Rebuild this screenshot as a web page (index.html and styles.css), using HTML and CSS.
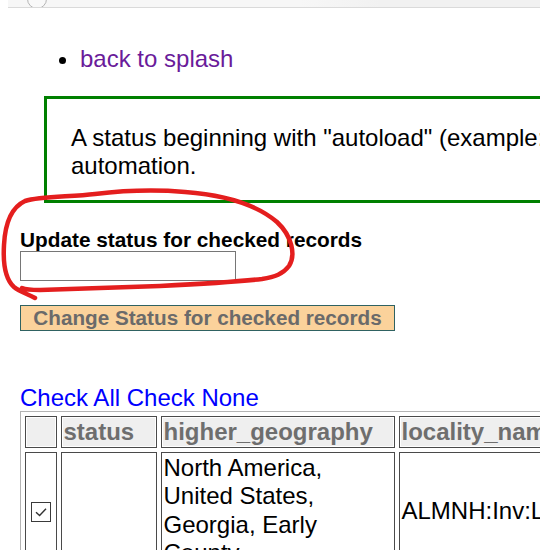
FILE: index.html
```html
<!DOCTYPE html>
<html lang="en">
<head>
<meta charset="utf-8">
<title>Update status</title>
<link rel="stylesheet" href="styles.css">
</head>
<body>
<div class="chrome"><span class="chrome-btn"></span></div>
<main class="page">
  <ul class="nav">
    <li><a class="nav-link" href="#">back to splash</a></li>
  </ul>
  <div class="notice">
    <p>A status beginning with "autoload" (example: "autoload_core") will be picked up by<br>automation.</p>
  </div>
  <form class="status-form">
    <label class="status-label" for="status">Update status for checked records</label>
    <input class="status-input" id="status" type="text">
    <button class="status-btn" type="button">Change Status for checked records</button>
  </form>
  <div class="checks"><a class="check-link" href="#">Check All</a> <a class="check-link" href="#">Check None</a></div>
  <table class="results">
    <thead>
      <tr>
        <th class="c-check"></th>
        <th class="c-status">status</th>
        <th class="c-geo">higher_geography</th>
        <th class="c-loc">locality_name</th>
      </tr>
    </thead>
    <tbody>
      <tr>
        <td class="cell-check">
          <span class="checkbox"><svg width="20" height="20" viewBox="0 0 20 20"><rect x="0.5" y="0.5" width="19" height="19" fill="#fff" stroke="#3a3a3a"/><path d="M5 10.2 L8.6 13.6 L15 6.8" fill="none" stroke="#333" stroke-width="1.4"/></svg></span>
        </td>
        <td></td>
        <td>North America, United States, Georgia, Early County</td>
        <td>ALMNH:Inv:Locality</td>
      </tr>
    </tbody>
  </table>
</main>
<svg class="scribble" width="540" height="550" viewBox="0 0 540 550">
  <path d="M35 298 C28 294 20 292 14 287 C5 279 3 262 4 245 C5 225 10 208 25 201 C40 196 70 197 95 194 C120 191 150 189 185 192 C225 195 257 205 277 222 C292 236 296 255 289 266 C283 274 275 277 262 279 C235 282 200 284 160 286 C110 288 70 289 40 290 C30 290 24 289 22 288" fill="none" stroke="#e41e1e" stroke-width="4.5" stroke-linecap="round" stroke-linejoin="round"/>
</svg>
</body>
</html>
```

FILE: styles.css
```css
html, body {
  margin: 0;
  padding: 0;
  background: #fff;
  overflow-x: hidden;
}

body {
  font-family: "Liberation Sans", Arial, sans-serif;
  font-size: 24px;
  color: #000;
  position: relative;
}

.chrome {
  margin-left: 8px;
  height: 7px;
  background: linear-gradient(to right, #f7f7f7 0%, #f7f7f7 55%, #f1f1f1 70%, #f1f1f1 100%);
  border-bottom: 1px solid #dadada;
  overflow: hidden;
}

.chrome-btn {
  display: block;
  width: 18px;
  height: 18px;
  margin: -11px 0 0 19px;
  border: 1.5px solid #b5b5b5;
  border-radius: 50%;
  background: #f9f9f9;
}

.page {
  padding: 0 20px;
}

.nav {
  margin: 37px 0 0;
  padding-left: 60px;
  line-height: 27.6px;
}

.nav-link {
  color: #6a1b9a;
  text-decoration: none;
}

.notice {
  margin: 23px 0 0 24px;
  width: 640px;
  border: 3px solid #008000;
  padding: 25px 24px 20px;
}

.notice p {
  margin: 0;
  white-space: nowrap;
  line-height: 28px;
}

.status-form {
  margin-top: 25px;
  display: flex;
  flex-direction: column;
  align-items: flex-start;
}

.status-label {
  font-weight: bold;
  font-size: 20.8px;
  line-height: 23px;
}

.status-input {
  box-sizing: border-box;
  width: 216px;
  height: 30px;
  margin: 0;
  border: 1px solid #767676;
  padding: 0 3px;
  font-family: inherit;
  font-size: 20px;
}

.status-btn {
  margin-top: 24px;
  box-sizing: border-box;
  width: 375px;
  height: 26px;
  padding: 0;
  border: 1px solid #2f6262;
  background: #fbd29b;
  color: #6a6a6a;
  font-family: inherit;
  font-weight: bold;
  font-size: 20.7px;
  line-height: 24px;
}

.checks {
  margin-top: 53px;
  line-height: 28px;
}

.check-link {
  color: #0000ff;
  text-decoration: none;
}

.results {
  table-layout: fixed;
  width: 984px;
  border: 1px solid #b4b4b4;
  border-spacing: 4px;
  margin-top: -1px;
}

.results th,
.results td {
  box-sizing: border-box;
  border: 1px solid #4a4a4a;
  padding: 1.5px;
}

.results th {
  background: #efefef;
  box-shadow: inset 0 0 0 1px #fff;
  color: #6e6e6e;
  font-weight: bold;
  text-align: left;
  line-height: 27px;
  white-space: nowrap;
  overflow: hidden;
}

.results td {
  vertical-align: middle;
  line-height: 28.3px;
}

.c-check { width: 32px; }
.c-status { width: 96px; }
.c-geo { width: 234px; }
.c-loc { width: 600px; }

.cell-check {
  text-align: center;
}

.checkbox {
  display: inline-block;
  width: 20px;
  height: 20px;
  vertical-align: middle;
}

.checkbox svg {
  display: block;
}

.scribble {
  position: absolute;
  left: 0;
  top: 0;
  pointer-events: none;
}
```
